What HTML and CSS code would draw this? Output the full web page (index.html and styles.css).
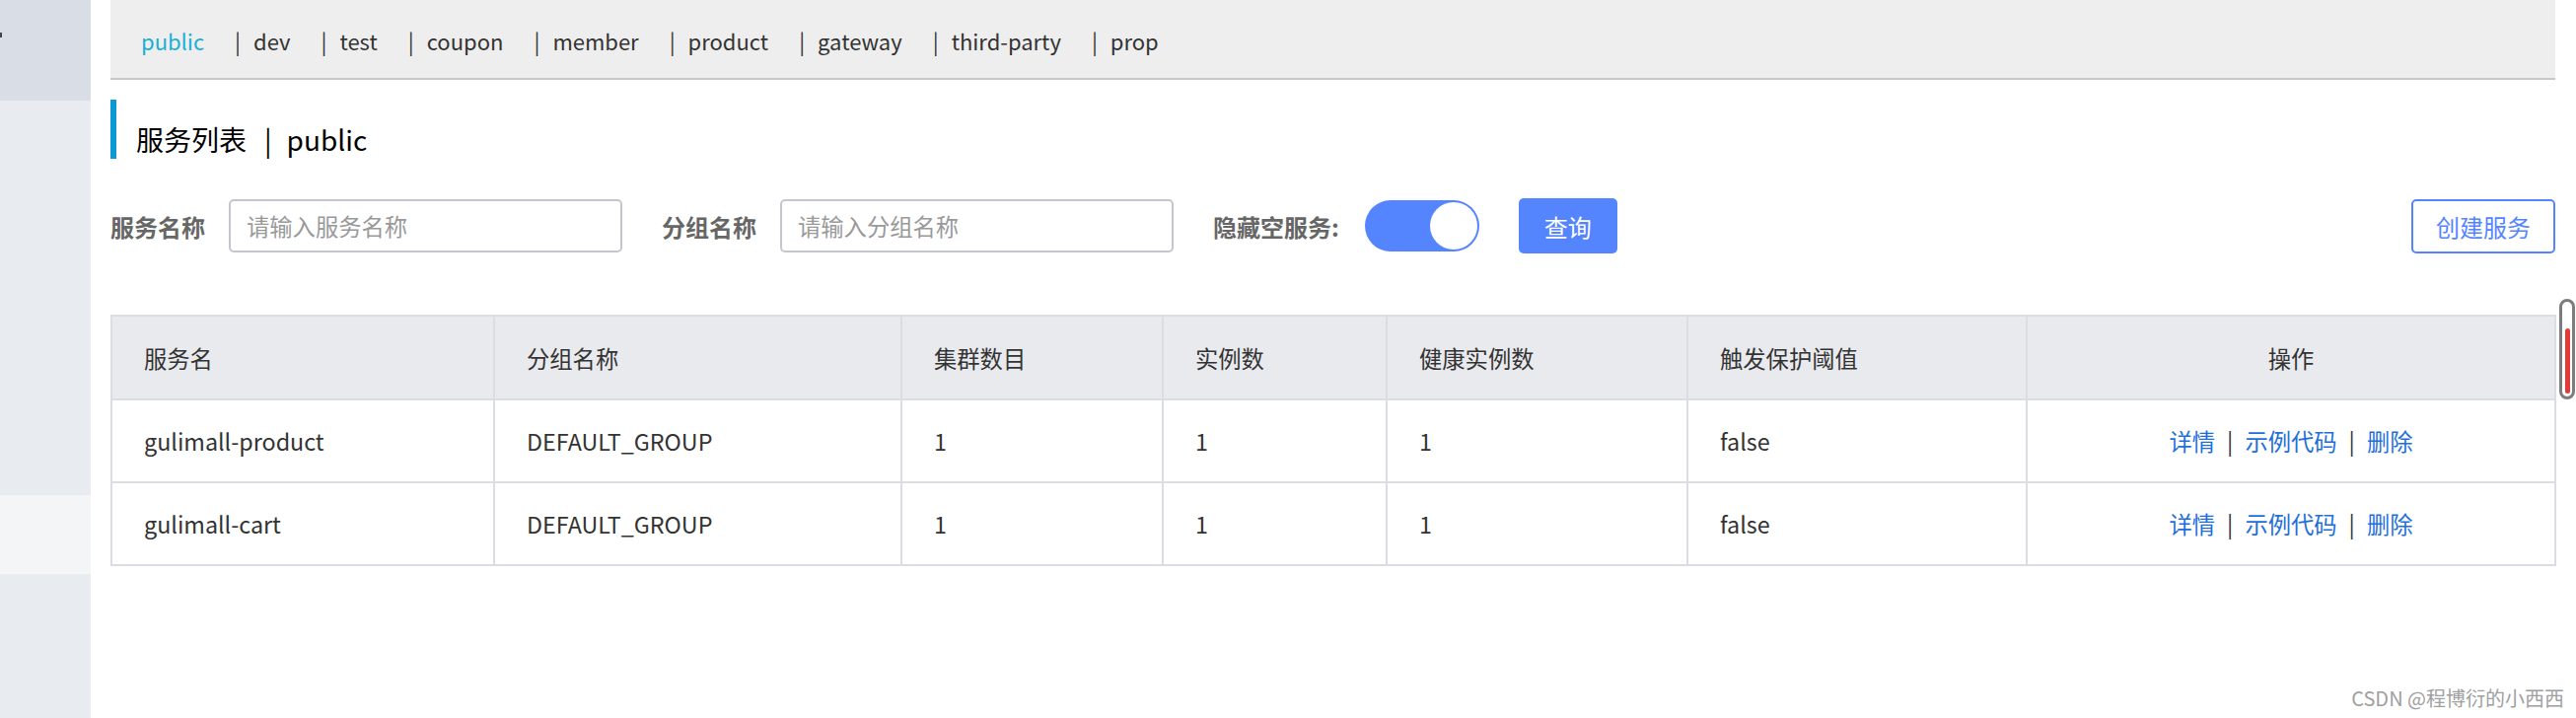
FILE: index.html
```html
<!DOCTYPE html>
<html lang="zh-CN">
<head>
    <meta charset="UTF-8">
    <title>服务列表</title>
    <link rel="stylesheet" href="styles.css">
</head>
<body>
    <div class="page">
        <aside class="sidebar">
            <div class="side-top"><span class="caret"></span></div>
            <div class="side-list"></div>
            <div class="side-item"></div>
        </aside>

        <main class="main">
            <nav class="tabs">
                <a class="tab active">public</a>
                <span class="sep">|</span><a class="tab">dev</a>
                <span class="sep">|</span><a class="tab">test</a>
                <span class="sep">|</span><a class="tab">coupon</a>
                <span class="sep">|</span><a class="tab">member</a>
                <span class="sep">|</span><a class="tab">product</a>
                <span class="sep">|</span><a class="tab">gateway</a>
                <span class="sep">|</span><a class="tab">third-party</a>
                <span class="sep">|</span><a class="tab">prop</a>
            </nav>

            <h2 class="title">服务列表<span class="title-sep">|</span>public</h2>

            <div class="search">
                <label class="label">服务名称</label>
                <input class="input" placeholder="请输入服务名称">
                <label class="label">分组名称</label>
                <input class="input" placeholder="请输入分组名称">
                <label class="label label-hide">隐藏空服务:</label>
                <span class="switch"><span class="knob"></span></span>
                <button class="btn btn-primary">查询</button>
                <button class="btn btn-outline">创建服务</button>
            </div>

            <table class="grid">
                <colgroup>
                    <col style="width:388px">
                    <col style="width:413px">
                    <col style="width:265px">
                    <col style="width:227px">
                    <col style="width:305px">
                    <col style="width:344px">
                    <col style="width:536px">
                </colgroup>
                <thead>
                    <tr>
                        <th>服务名</th>
                        <th>分组名称</th>
                        <th>集群数目</th>
                        <th>实例数</th>
                        <th>健康实例数</th>
                        <th>触发保护阈值</th>
                        <th class="center">操作</th>
                    </tr>
                </thead>
                <tbody>
                    <tr>
                        <td>gulimall-product</td>
                        <td>DEFAULT_GROUP</td>
                        <td>1</td>
                        <td>1</td>
                        <td>1</td>
                        <td>false</td>
                        <td class="center ops"><a>详情</a><span class="op-sep">|</span><a>示例代码</a><span class="op-sep">|</span><a>删除</a></td>
                    </tr>
                    <tr>
                        <td>gulimall-cart</td>
                        <td>DEFAULT_GROUP</td>
                        <td>1</td>
                        <td>1</td>
                        <td>1</td>
                        <td>false</td>
                        <td class="center ops"><a>详情</a><span class="op-sep">|</span><a>示例代码</a><span class="op-sep">|</span><a>删除</a></td>
                    </tr>
                </tbody>
            </table>
        </main>
    </div>

    <div class="scroll-thumb"><span></span></div>
    <div class="watermark">CSDN @程博衍的小西西</div>
</body>
</html>
```

FILE: styles.css
```css
body, html {
    width: 100%;
    height: 100%;
    margin: 0;
    overflow: hidden;
}
body {
    font-family: "Noto Sans CJK SC", "Noto Sans", sans-serif;
    font-size: 23.3px;
    color: #333;
    background: #fff;
}
.page {
    display: flex;
    height: 100%;
}

/* left menu */
.sidebar {
    width: 92px;
    flex-shrink: 0;
    margin-right: 20px;
    background: #e8ebf0;
    display: flex;
    flex-direction: column;
}
.side-top {
    height: 102px;
    background: #d9dde5;
}
.caret {
    display: block;
    width: 2px;
    height: 5px;
    margin-top: 33px;
    background: #444;
}
.side-list {
    height: 400px;
}
.side-item {
    height: 80px;
    background: #f4f5f7;
}

.main {
    flex: 1;
    padding-right: 21px;
    min-width: 0;
}

/* namespace tabs */
.tabs {
    height: 81px;
    box-sizing: border-box;
    border-bottom: 2px solid #c8c8c8;
    background: #eee;
    display: flex;
    align-items: center;
    padding: 3px 0 0 31px;
    font-size: 22px;
}
.tab {
    color: #333;
    margin-right: 31px;
}
.tab.active {
    color: #1ab0d6;
}
.sep {
    color: #333;
    margin-right: 13px;
}

.title {
    margin: 20px 0 0;
    height: 60px;
    box-sizing: border-box;
    border-left: 6px solid #0b9ad3;
    padding: 20px 0 0 20px;
    display: flex;
    align-items: center;
    font-size: 28px;
    font-weight: normal;
    color: #000;
}
.title-sep {
    margin: 0 15px 0 18px;
}

/* search row */
.search {
    display: flex;
    align-items: center;
    margin-top: 40px;
    height: 56px;
}
.label {
    font-size: 24px;
    font-weight: bold;
    color: #666;
    margin-right: 24px;
}
.label-hide {
    margin-right: 26px;
}
.input {
    width: 399px;
    height: 54px;
    box-sizing: border-box;
    border: 2px solid #c4c6cf;
    border-radius: 5px;
    padding: 0 16px;
    font-family: inherit;
    font-size: 23.3px;
    margin-right: 40px;
    outline: none;
}
.input::placeholder {
    color: #999;
}
.switch {
    width: 116px;
    height: 52px;
    border-radius: 26px;
    background: #5584ff;
    display: flex;
    justify-content: flex-end;
    align-items: center;
    margin-right: 40px;
}
.knob {
    width: 48px;
    height: 48px;
    border-radius: 50%;
    background: #fff;
    margin-right: 2px;
}
.btn {
    height: 56px;
    border-radius: 5px;
    font-family: inherit;
    font-size: 24px;
    padding: 0;
}
.btn-primary {
    width: 100px;
    border: none;
    background: #5584ff;
    color: #fff;
}
.btn-outline {
    margin-left: auto;
    width: 146px;
    height: 55px;
    border: 2px solid #5584ff;
    background: #fff;
    color: #5584ff;
}

/* service table */
.grid {
    margin-top: 62px;
    width: 2478px;
    table-layout: fixed;
    border-collapse: collapse;
    border: 2px solid #dcdde3;
}
.grid th,
.grid td {
    border: 2px solid #dcdde3;
    padding: 0 0 0 32px;
    text-align: left;
    font-weight: normal;
    color: #333;
}
.grid th {
    height: 83px;
    background: #e9eaee;
}
.grid td {
    height: 82px;
}
.grid .center {
    text-align: center;
    padding: 0;
}
.ops a {
    color: #1e6fd9;
}
.op-sep {
    margin: 0 12px;
    color: #333;
}

/* overlays */
.scroll-thumb {
    position: absolute;
    left: 2595px;
    top: 303px;
    width: 16px;
    height: 102px;
    box-sizing: border-box;
    border: 3px solid #7d7d7d;
    border-radius: 8px;
    display: flex;
    justify-content: center;
}
.scroll-thumb span {
    width: 5px;
    height: 66px;
    margin-top: 27px;
    border-radius: 3px;
    background: #e53935;
}
.watermark {
    position: absolute;
    right: 12px;
    top: 693px;
    font-size: 20px;
    color: #a0a0a0;
    text-shadow: 0 0 1px #fff;
}
```
